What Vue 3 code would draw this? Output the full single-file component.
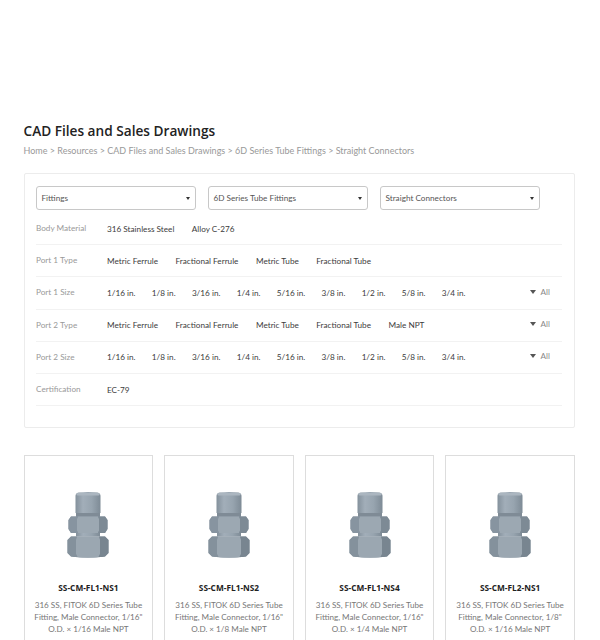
<script setup>
const selects = ['Fittings', '6D Series Tube Fittings', 'Straight Connectors']
const sizes = ['1/16 in.', '1/8 in.', '3/16 in.', '1/4 in.', '5/16 in.', '3/8 in.', '1/2 in.', '5/8 in.', '3/4 in.']
const rows = [
  { label: 'Body Material', options: ['316 Stainless Steel', 'Alloy C-276'] },
  { label: 'Port 1 Type', options: ['Metric Ferrule', 'Fractional Ferrule', 'Metric Tube', 'Fractional Tube'] },
  { label: 'Port 1 Size', options: sizes, all: true, tight: true },
  { label: 'Port 2 Type', options: ['Metric Ferrule', 'Fractional Ferrule', 'Metric Tube', 'Fractional Tube', 'Male NPT'], all: true },
  { label: 'Port 2 Size', options: sizes, all: true, tight: true },
  { label: 'Certification', options: ['EC-79'] }
]
const products = [
  { name: 'SS-CM-FL1-NS1', desc: '316 SS, FITOK 6D Series Tube Fitting, Male Connector, 1/16" O.D. × 1/16 Male NPT' },
  { name: 'SS-CM-FL1-NS2', desc: '316 SS, FITOK 6D Series Tube Fitting, Male Connector, 1/16" O.D. × 1/8 Male NPT' },
  { name: 'SS-CM-FL1-NS4', desc: '316 SS, FITOK 6D Series Tube Fitting, Male Connector, 1/16" O.D. × 1/4 Male NPT' },
  { name: 'SS-CM-FL2-NS1', desc: '316 SS, FITOK 6D Series Tube Fitting, Male Connector, 1/8" O.D. × 1/16 Male NPT' }
]
</script>

<template>
  <div class="page">
    <h1 class="title">CAD Files and Sales Drawings</h1>
    <p class="crumbs">Home &gt; Resources &gt; CAD Files and Sales Drawings &gt; 6D Series Tube Fittings &gt; Straight Connectors</p>

    <section class="panel">
      <div class="selects">
        <div v-for="s in selects" :key="s" class="select">
          <span>{{ s }}</span>
          <i class="caret"></i>
        </div>
      </div>
      <div v-for="r in rows" :key="r.label" class="row">
        <div class="label">{{ r.label }}</div>
        <div class="options" :class="{ tight: r.tight }">
          <span v-for="o in r.options" :key="o">{{ o }}</span>
        </div>
        <div v-if="r.all" class="all"><i class="caret"></i>All</div>
      </div>
    </section>

    <section class="cards">
      <article v-for="p in products" :key="p.name" class="card">
        <svg class="fitting" viewBox="0 0 42 68" width="42" height="68" aria-hidden="true">
          <defs>
            <linearGradient id="capG" x1="0" x2="1" y1="0" y2="0">
              <stop offset="0" stop-color="#84919c" />
              <stop offset="0.3" stop-color="#a2aeb9" />
              <stop offset="0.65" stop-color="#97a4af" />
              <stop offset="1" stop-color="#7e8b96" />
            </linearGradient>
          </defs>
          <path d="M8.500 21V4q0-3 3-3.500q9.500-1 19 0q3 .5 3 3.500V21q-12.500 2-25 0z" fill="url(#capG)" />
          <rect x="9.500" y="1" width="23" height="2.500" rx="1.200" fill="#abb6c0" />
          <rect x="9" y="21" width="24" height="4" fill="#7f8b96" />
          <path d="M4 24.500H38L40.500 28V37L38 41H4L1.500 37V28z" fill="#8c98a3" />
          <path d="M11 24.500H31L32 27V38.500L31 41H11L10 38.500V27z" fill="#9ca8b2" />
          <path d="M4 24.500H11L10 27V38.500L11 41H4L1.500 37V28z" fill="#8794a0" />
          <path d="M38 24.500H31L32 27V38.500L31 41H38L40.500 37V28z" fill="#7d8a95" />
          <rect x="9" y="41" width="24" height="3.500" fill="url(#capG)" />
          <path d="M4 44.500H38L41.500 48V61L38 64.500Q21 67 4 64.500L.5 61V48z" fill="#8f9ca7" />
          <path d="M10 44.500H32L33 47.500V62L31.500 65Q21 66 10.500 65L9 62V47.500z" fill="#9ba7b1" />
          <path d="M4 44.500H10L9 47.500V62L10.500 65Q7 65 4 64.500L.5 61V48z" fill="#84919c" />
          <path d="M38 44.500H32L33 47.500V62L31.500 65Q35 65 38 64.500L41.500 61V48z" fill="#788590" />
        </svg>
        <h2 class="name">{{ p.name }}</h2>
        <p class="desc">{{ p.desc }}</p>
      </article>
    </section>
  </div>
</template>

<style scoped>
.page {
  box-sizing: border-box;
  height: 640px;
  overflow: hidden;
  padding: 122px 25px 0 23.500px;
  background: #fff;
  font-family: Lato, "Open Sans", sans-serif;
  color: #333;
}
.title {
  margin: 0;
  font-family: "Open Sans", sans-serif;
  font-size: 13.650px;
  line-height: 18px;
  font-weight: 600;
  color: #222;
}
.crumbs {
  margin: 3px 0 0;
  font-size: 9px;
  line-height: 16px;
  color: #999;
  white-space: nowrap;
}
.panel {
  box-sizing: border-box;
  height: 255px;
  margin-top: 14px;
  padding: 12px 12px 0 11.500px;
  border: 1px solid #ececec;
  border-radius: 2px;
}
.selects {
  display: flex;
  gap: 12px;
  margin-bottom: 3px;
}
.select {
  box-sizing: border-box;
  width: 160px;
  height: 24px;
  padding: 0 5px 0 4.500px;
  display: flex;
  align-items: center;
  justify-content: space-between;
  border: 1px solid #c8c8c8;
  border-radius: 3px;
  font-size: 8.200px;
  color: #555;
}
.caret {
  display: block;
  width: 0;
  height: 0;
  border: 2.500px solid transparent;
  border-top: 3.500px solid #333;
  border-bottom: 0;
}
.row {
  box-sizing: border-box;
  height: 32.200px;
  display: flex;
  align-items: center;
  border-bottom: 1px solid #f2f2f2;
  font-size: 8.200px;
}
.label {
  width: 71px;
  flex: none;
  color: #999;
  margin-top: -1px;
}
.options {
  display: flex;
  gap: 17.500px;
  color: #3c3c3c;
  flex: 1;
  white-space: nowrap;
}
.options.tight {
  gap: 16.300px;
}
.all {
  display: flex;
  align-items: center;
  gap: 5px;
  margin-right: 12px;
  color: #888;
  margin-top: -2px;
}
.all .caret {
  border-width: 4px 3px 0;
  border-top-color: #555;
}
.cards {
  display: grid;
  grid-template-columns: repeat(4, 1fr);
  gap: 10.670px;
  margin-top: 27px;
}
.card {
  box-sizing: border-box;
  height: 240px;
  padding: 36px 7px 0;
  border: 1px solid #ddd;
  text-align: center;
}
.fitting {
  display: block;
  margin: 0 auto;
}
.name {
  margin: 22px 0 0;
  font-family: "Open Sans", sans-serif;
  font-size: 8.300px;
  line-height: 12px;
  font-weight: 700;
  color: #222;
}
.desc {
  margin: 6px 0 0;
  font-size: 8.100px;
  line-height: 11.800px;
  color: #777;
}
</style>
